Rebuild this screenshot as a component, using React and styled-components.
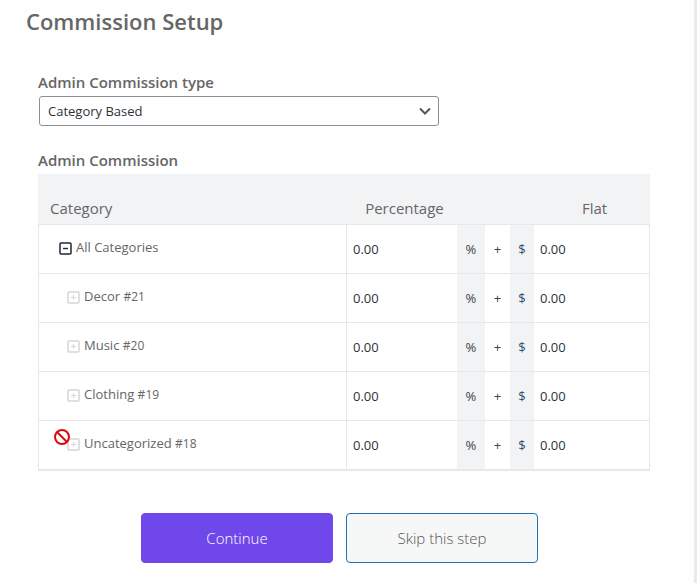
import React, { useState } from 'react';
import styled, { createGlobalStyle } from 'styled-components';

const GlobalStyle = createGlobalStyle`
  *, *::before, *::after { box-sizing: border-box; }
  body {
    margin: 0;
    background: #fefefe;
    color: #646970;
    font-family: "Open Sans", "Noto Sans", sans-serif;
    font-size: 13px;
  }
  button, input, select { font-family: inherit; }
`;

const Panel = styled.main`
  min-height: 100vh;
  padding: 5px 44px 20px 38px;
  border-right: 3px solid #eaeaea;
`;

const Title = styled.h1`
  margin: 0 0 35px -12px;
  font-size: 22px;
  line-height: 32px;
  font-weight: 600;
  color: #666;
`;

const FieldLabel = styled.label`
  display: block;
  font-size: 15px;
  line-height: 20px;
  font-weight: 600;
  color: #666;
`;

const SelectWrap = styled.div`
  position: relative;
  max-width: 400px;
  margin: 4px 0 24px 1px;
`;

const Select = styled.select`
  display: block;
  width: 100%;
  height: 30px;
  padding: 0 28px 0 8px;
  border: 1px solid #8c8f94;
  border-radius: 3px;
  background: #fff;
  color: #2c3338;
  font-size: 13px;
  appearance: none;
`;

const Chevron = styled.svg`
  position: absolute;
  right: 8px;
  top: 9px;
  pointer-events: none;
`;

const SectionLabel = styled(FieldLabel).attrs({ as: 'h2' })`
  margin: 0 0 4px;
`;

const Table = styled.table`
  width: 100%;
  table-layout: fixed;
  border-spacing: 0;
  border-bottom: 1px solid #e8e8e9;
  background: #fff;
`;

const Col = styled.col`
  width: ${(p) => p.$width || 'auto'};
`;

const Th = styled.th`
  height: 50px;
  padding: ${(p) => (p.$start ? '18px 0 0 12px' : '18px 0 0 5px')};
  background: #f2f3f5;
  color: #666;
  font-size: 15px;
  line-height: 20px;
  font-weight: 400;
  text-align: ${(p) => (p.$start ? 'left' : 'center')};
`;

const Td = styled.td`
  height: 49px;
  padding: 0;
  border-top: 1px solid #e8e8e9;
  &:first-child { border-left: 1px solid #e8e8e9; }
  &:last-child { border-right: 1px solid #e8e8e9; }
  tr:last-child > & {
    height: 50px;
    border-bottom: 1px solid #e8e8e9;
  }
`;

const NameCell = styled(Td)`
  position: relative;
  padding: 0 0 4px ${(p) => (p.$child ? '28px' : '20px')};
  border-right: 1px solid #e8e8e9;
`;

const Name = styled.div`
  display: flex;
  align-items: center;
  gap: 4px;
  font-size: 13px;
  line-height: 20px;
  color: #666;
`;

const Toggle = styled.button`
  display: flex;
  width: 13px;
  height: 13px;
  margin-top: 3px;
  padding: 0;
  border: 0;
  background: none;
  color: ${(p) => (p.disabled ? '#d4d6d8' : '#222733')};
`;

const Id = styled.span`
  font-size: 12px;
`;

const Blocked = styled.svg`
  position: absolute;
  left: 15px;
  top: 8px;
`;

const Symbol = styled(Td)`
  background: ${(p) => (p.$shaded ? '#f2f3f5' : 'transparent')};
  color: ${(p) => (p.$blue ? '#2f4a78' : '#3c434a')};
  font-size: 13px;
  text-align: center;
`;

const Amount = styled.input`
  display: block;
  width: 100%;
  height: 40px;
  padding: 0 6px;
  border: 0;
  background: transparent;
  color: #2c3338;
  font-size: 13px;
`;

const Actions = styled.div`
  display: flex;
  flex-wrap: wrap;
  justify-content: center;
  gap: 13px;
  margin-top: 42px;
  padding-right: 9px;
`;

const Button = styled.button`
  width: 192px;
  height: 50px;
  border: 1px solid ${(p) => (p.$primary ? '#7047eb' : '#2271b1')};
  border-radius: 4px;
  background: ${(p) => (p.$primary ? '#7047eb' : '#f6f7f7')};
  color: ${(p) => (p.$primary ? '#fff' : '#555')};
  font-size: 15px;
  font-weight: 300;
`;

const categories = [
  { name: 'All Categories' },
  { name: 'Decor', id: 21 },
  { name: 'Music', id: 20 },
  { name: 'Clothing', id: 19 },
  { name: 'Uncategorized', id: 18, blocked: true },
];

function ToggleIcon({ plus }) {
  return (
    <svg width="13" height="13" viewBox="0 0 13 13" fill="none" stroke="currentColor" aria-hidden="true">
      <rect x="1" y="1" width="11" height="11" rx="1" strokeWidth="1.5" />
      <path d={plus ? 'M4 6.5h5M6.5 4v5' : 'M4 6.5h5'} strokeWidth={plus ? 1 : 1.4} />
    </svg>
  );
}

function CategoryRow({ name, id, blocked }) {
  const [percent, setPercent] = useState('0.00');
  const [flat, setFlat] = useState('0.00');
  return (
    <tr>
      <NameCell $child={Boolean(id)}>
        <Name>
          <Toggle type="button" disabled={Boolean(id)} aria-label={`Toggle ${name}`}>
            <ToggleIcon plus={Boolean(id)} />
          </Toggle>
          <span>{name} {id && <Id>#{id}</Id>}</span>
        </Name>
        {blocked && (
          <Blocked width="16" height="16" viewBox="0 0 16 16" fill="none" stroke="#dc0b0b" strokeWidth="2" aria-hidden="true">
            <circle cx="8" cy="8" r="7" />
            <path d="M3 3l10 10" />
          </Blocked>
        )}
      </NameCell>
      <Td><Amount aria-label={`${name} percentage`} value={percent} onChange={(e) => setPercent(e.target.value)} /></Td>
      <Symbol $shaded>%</Symbol>
      <Symbol>+</Symbol>
      <Symbol $shaded $blue>$</Symbol>
      <Td><Amount aria-label={`${name} flat`} value={flat} onChange={(e) => setFlat(e.target.value)} /></Td>
    </tr>
  );
}

export default function App() {
  return (
    <>
      <GlobalStyle />
      <Panel>
        <Title>Commission Setup</Title>
        <FieldLabel htmlFor="commission-type">Admin Commission type</FieldLabel>
        <SelectWrap>
          <Select id="commission-type" defaultValue="category">
            <option value="category">Category Based</option>
            <option value="fixed">Fixed</option>
          </Select>
          <Chevron width="12" height="12" viewBox="0 0 12 12" fill="none" stroke="#50575e" strokeWidth="2" aria-hidden="true">
            <path d="M1 3.5l5 5 5-5" />
          </Chevron>
        </SelectWrap>
        <SectionLabel id="admin-commission">Admin Commission</SectionLabel>
        <Table aria-labelledby="admin-commission">
          <colgroup>
            <Col />
            <Col $width="110px" />
            <Col $width="28px" />
            <Col $width="25px" />
            <Col $width="24px" />
            <Col $width="116px" />
          </colgroup>
          <thead>
            <tr>
              <Th scope="col" $start>Category</Th>
              <Th scope="col">Percentage</Th>
              <Th colSpan={3} />
              <Th scope="col">Flat</Th>
            </tr>
          </thead>
          <tbody>
            {categories.map((c) => <CategoryRow key={c.name} {...c} />)}
          </tbody>
        </Table>
        <Actions>
          <Button type="button" $primary>Continue</Button>
          <Button type="button">Skip this step</Button>
        </Actions>
      </Panel>
    </>
  );
}
